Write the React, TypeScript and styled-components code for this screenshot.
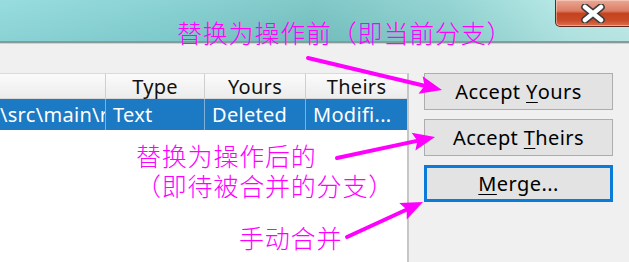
import React from 'react'
import styled, { createGlobalStyle } from 'styled-components'

const GlobalStyle = createGlobalStyle`
  html, body {
    margin: 0;
    padding: 0;
    width: 629px;
    height: 262px;
    overflow: hidden;
    background: #f0f0f0;
  }
`

const UI_FONT = `"Noto Sans", "Open Sans", "Noto Sans CJK SC", sans-serif`
const CJK_FONT = `"Noto Sans CJK SC", "Noto Sans", sans-serif`
const PINK = '#ff00ff'

const Window = styled.div`
  position: relative;
  width: 629px;
  height: 262px;
  overflow: hidden;
  display: flex;
  flex-direction: column;
  font-family: ${UI_FONT};
`

const TitleBar = styled.div`
  height: 41px;
  flex: none;
  display: flex;
  justify-content: flex-end;
  align-items: flex-start;
  overflow: hidden;
  background:
    linear-gradient(to bottom, rgba(255, 255, 255, 0.08), rgba(0, 0, 0, 0.03)),
    linear-gradient(to right, #8fd9dc 0%, #82d0d2 25%, #76c3c3 50%, #8dd2d0 72%, #b2e7e5 90%, #bdebe9 100%);
  border-bottom: 2px solid #869a99;
  box-shadow: 0 1px 0 #c9d4d3;
`

const CloseButton = styled.div`
  width: 80px;
  height: 27px;
  margin-right: -6px;
  box-sizing: border-box;
  padding-right: 4px;
  display: flex;
  align-items: center;
  justify-content: center;
  border: 1px solid #5e2a20;
  border-top: none;
  border-radius: 0 0 0 5px;
  background: linear-gradient(
    to bottom,
    #eaa896 0%,
    #dc7d64 42%,
    #c4431f 52%,
    #c94b28 78%,
    #de7050 100%
  );
  box-shadow: inset 0 0 0 1px rgba(255, 230, 220, 0.45);
`

const Content = styled.div`
  flex: 1;
  display: flex;
  min-height: 0;
`

const TablePane = styled.div`
  width: 409px;
  flex: none;
  padding-top: 30px;
  display: flex;
  flex-direction: column;
`

const Table = styled.div`
  flex: 1;
  background: #ffffff;
  border-top: 1px solid #dadada;
  border-right: 2px solid #c6c6c6;
  overflow: hidden;
`

const Row = styled.div`
  display: grid;
  grid-template-columns: 106px 99px 101px 101px;
`

const HeadCell = styled.div`
  height: 25px;
  box-sizing: border-box;
  display: flex;
  align-items: center;
  justify-content: center;
  font-size: 20px;
  letter-spacing: 0.3px;
  color: #111;
  background: linear-gradient(to bottom, #fbfbfb, #ececec);
  border-right: 1px solid #cfcfcf;
  border-bottom: 1px solid #d8d8d8;
  &:last-child {
    border-right: none;
  }
`

const Cell = styled.div<{ $scrolled?: boolean }>`
  height: 31px;
  box-sizing: border-box;
  display: flex;
  align-items: center;
  padding-left: ${p => (p.$scrolled ? '0' : '7px')};
  font-size: 20px;
  letter-spacing: 0.3px;
  color: #ffffff;
  white-space: nowrap;
  overflow: hidden;
  background: #1c79c3;
  border-right: 1px solid #7fb0da;
  &:last-child {
    border-right: none;
  }
`

const ButtonColumn = styled.div`
  flex: 1;
  padding: 30px 0 0 15px;
  display: flex;
  flex-direction: column;
  gap: 9px;
`

const Button = styled.div<{ $default?: boolean }>`
  width: 189px;
  height: 37px;
  box-sizing: border-box;
  display: flex;
  align-items: center;
  justify-content: center;
  font-size: 20px;
  letter-spacing: 0.4px;
  color: #000;
  background: #e3e3e3;
  border: ${p => (p.$default ? '3px solid #0a7bd8' : '1px solid #adadad')};
  u {
    text-decoration-thickness: 1px;
    text-underline-offset: 3px;
  }
`

const Overlay = styled.div`
  position: absolute;
  inset: 0;
  pointer-events: none;
`

const Label = styled.div<{ $left: number; $top: number }>`
  position: absolute;
  left: ${p => p.$left}px;
  top: ${p => p.$top}px;
  font-family: ${CJK_FONT};
  font-size: 25px;
  font-weight: 300;
  letter-spacing: 0.8px;
  line-height: 30px;
  color: ${PINK};
  white-space: pre;
`

const ArrowLayer = styled.svg`
  position: absolute;
  inset: 0;
`

type Pt = [number, number]

function Arrow({ from, to }: { from: Pt; to: Pt }) {
  const dx = to[0] - from[0]
  const dy = to[1] - from[1]
  const len = Math.hypot(dx, dy)
  const ux = dx / len
  const uy = dy / len
  const head = 22
  const half = 9
  const bx = to[0] - ux * head
  const by = to[1] - uy * head
  const pts = [
    `${to[0]},${to[1]}`,
    `${bx - uy * half},${by + ux * half}`,
    `${bx + ux * 4},${by + uy * 4}`,
    `${bx + uy * half},${by - ux * half}`,
  ].join(' ')
  return (
    <g>
      <line x1={from[0]} y1={from[1]} x2={bx + ux * 6} y2={by + uy * 6} stroke={PINK} strokeWidth={4} strokeLinecap="round" />
      <polygon points={pts} fill={PINK} />
    </g>
  )
}

const App: React.FC = () => {
  return (
    <Window>
      <GlobalStyle />
      <TitleBar>
        <CloseButton>
          <svg width="26" height="19" viewBox="0 0 26 19">
            <path d="M5 3 L21 16 M21 3 L5 16" stroke="#3c3c3c" strokeWidth="7.5" strokeLinecap="round" />
            <path d="M5 3 L21 16 M21 3 L5 16" stroke="#ffffff" strokeWidth="4.5" strokeLinecap="round" />
          </svg>
        </CloseButton>
      </TitleBar>
      <Content>
        <TablePane>
          <Table>
            <Row>
              <HeadCell />
              <HeadCell>Type</HeadCell>
              <HeadCell>Yours</HeadCell>
              <HeadCell>Theirs</HeadCell>
            </Row>
            <Row>
              <Cell $scrolled>\src\main\res</Cell>
              <Cell>Text</Cell>
              <Cell>Deleted</Cell>
              <Cell>Modifi...</Cell>
            </Row>
          </Table>
        </TablePane>
        <ButtonColumn>
          <Button>
            Accept&nbsp;<u>Y</u>ours
          </Button>
          <Button>
            Accept&nbsp;<u>T</u>heirs
          </Button>
          <Button $default>
            <u>M</u>erge...
          </Button>
        </ButtonColumn>
      </Content>
      <Overlay>
        <Label $left={177} $top={17}>替换为操作前（即当前分支）</Label>
        <Label $left={136} $top={140}>{'替换为操作后的\n（即待被合并的分支）'}</Label>
        <Label $left={239} $top={222}>手动合并</Label>
        <ArrowLayer width="629" height="262" viewBox="0 0 629 262">
          <Arrow from={[308, 58]} to={[442, 90]} />
          <Arrow from={[337, 158]} to={[435, 137]} />
          <Arrow from={[347, 237]} to={[423, 202]} />
        </ArrowLayer>
      </Overlay>
    </Window>
  )
}

export default App
